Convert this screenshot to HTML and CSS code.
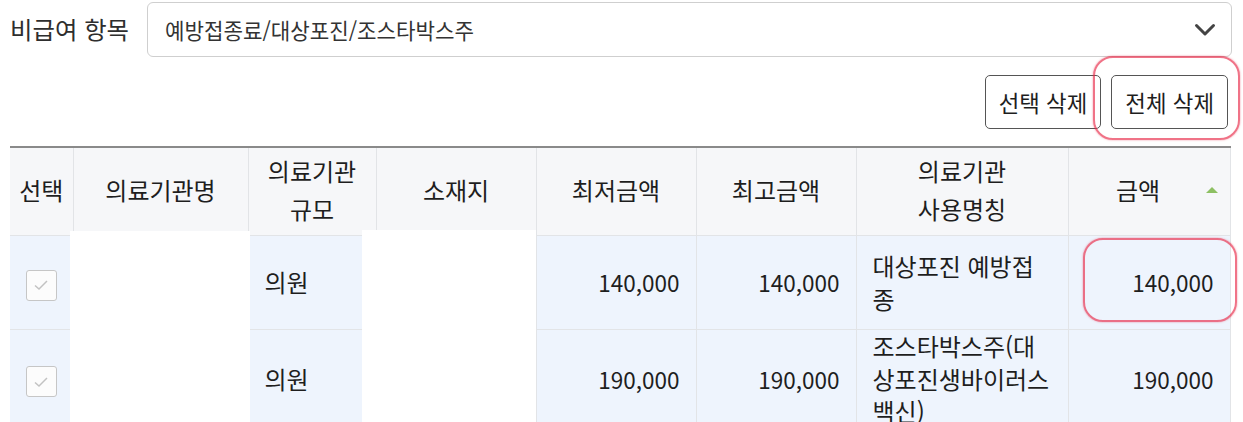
FILE: index.html
```html
<!DOCTYPE html>
<html lang="ko">
<head>
<meta charset="utf-8">
<title>비급여 항목</title>
<link rel="stylesheet" href="styles.css">
</head>
<body>
<div class="page">
  <div class="filter-row">
    <label class="filter-label">비급여 항목</label>
    <div class="select">
      <span class="select-text">예방접종료/대상포진/조스타박스주</span>
      <svg class="chevron" width="22" height="14" viewBox="0 0 22 14"><path d="M2.5 2.5 L11 11 L19.5 2.5" fill="none" stroke="#444" stroke-width="3" stroke-linecap="round" stroke-linejoin="round"/></svg>
    </div>
  </div>
  <div class="actions">
    <button class="btn">선택 삭제</button>
    <button class="btn">전체 삭제</button>
  </div>
  <div class="table-wrap">
    <table class="grid">
      <colgroup>
        <col class="c-sel"><col class="c-name"><col class="c-size"><col class="c-addr"><col class="c-min"><col class="c-max"><col class="c-alias"><col class="c-amt">
      </colgroup>
      <thead>
        <tr>
          <th>선택</th>
          <th>의료기관명</th>
          <th>의료기관<br>규모</th>
          <th>소재지</th>
          <th>최저금액</th>
          <th>최고금액</th>
          <th>의료기관<br>사용명칭</th>
          <th class="sorted">금액<span class="sort-icon"></span></th>
        </tr>
      </thead>
      <tbody>
        <tr>
          <td class="center"><span class="chk"><svg width="18" height="14" viewBox="0 0 18 14"><path d="M3 7.5 L7 11 L15 3" fill="none" stroke="#c2c2c2" stroke-width="1.5"/></svg></span></td>
          <td></td>
          <td>의원</td>
          <td></td>
          <td class="num">140,000</td>
          <td class="num">140,000</td>
          <td>대상포진 예방접<br>종</td>
          <td class="num">140,000</td>
        </tr>
        <tr>
          <td class="center"><span class="chk"><svg width="18" height="14" viewBox="0 0 18 14"><path d="M3 7.5 L7 11 L15 3" fill="none" stroke="#c2c2c2" stroke-width="1.5"/></svg></span></td>
          <td></td>
          <td>의원</td>
          <td></td>
          <td class="num">190,000</td>
          <td class="num">190,000</td>
          <td>조스타박스주(대<br>상포진생바이러스<br>백신)</td>
          <td class="num">190,000</td>
        </tr>
      </tbody>
    </table>
    <div class="redact redact-name"></div>
    <div class="redact redact-addr"></div>
  </div>
  <div class="mark mark-btn"></div>
  <div class="mark mark-amt"></div>
</div>
</body>
</html>
```

FILE: styles.css
```css
html, body {
  margin: 0;
  background: #fff;
}
body {
  font-family: "Noto Sans CJK KR", "Noto Sans", sans-serif;
  color: #1e1e1e;
}
.page {
  position: relative;
  width: 1243px;
  height: 422px;
  overflow: hidden;
  box-sizing: border-box;
  padding: 2px 11px 0 10px;
}
.filter-row {
  display: flex;
  align-items: center;
  height: 55px;
}
.filter-label {
  width: 137px;
  flex: none;
  font-size: 24.4px;
  color: #2e2e2e;
  padding-bottom: 2px;
}
.select {
  flex: 1;
  height: 55px;
  box-sizing: border-box;
  border: 1px solid #cfcfcf;
  border-radius: 6px;
  display: flex;
  align-items: center;
  justify-content: space-between;
  padding: 0 15px 0 17px;
  font-size: 21.2px;
  color: #333;
}
.chevron {
  margin-top: 1px;
}
.actions {
  display: flex;
  justify-content: flex-end;
  gap: 10px;
  margin-top: 18px;
  padding-right: 4px;
}
.btn {
  height: 54px;
  padding: 0 13px;
  border: 1px solid #555;
  border-radius: 5px;
  background: #fff;
  font-family: "Noto Sans CJK KR", "Noto Sans", sans-serif;
  font-size: 22.4px;
  color: #1e1e1e;
}
.table-wrap {
  position: relative;
  margin-top: 17px;
  width: 1220px;
}
.grid {
  width: 1220px;
  table-layout: fixed;
  border-collapse: collapse;
  font-size: 24px;
}
.c-sel { width: 63px; }
.c-name { width: 175px; }
.c-size { width: 128px; }
.c-addr { width: 160px; }
.c-min { width: 160px; }
.c-max { width: 160px; }
.c-alias { width: 212px; }
.c-amt { width: 162px; }
.grid thead tr {
  border-top: 2px solid #8a8a8a;
}
.grid th {
  height: 84px;
  padding: 0 0 3px;
  background: #f6f7f9;
  font-weight: 400;
  line-height: 38px;
  color: #1e1e1e;
  text-align: center;
  border-left: 1px solid #e2e4e7;
  border-bottom: 1px solid #e2e4e7;
}
.grid th:first-child {
  border-left: none;
}
.grid th:last-child {
  border-right: 1px solid #e2e4e7;
}
.grid th.sorted {
  position: relative;
  padding-right: 22px;
}
.sort-icon {
  position: absolute;
  right: 12px;
  top: 39px;
  width: 0;
  height: 0;
  border-left: 6px solid transparent;
  border-right: 6px solid transparent;
  border-bottom: 6px solid #8dc063;
}
.grid td {
  height: 93px;
  padding: 0 16px;
  background: #eef4fd;
  line-height: 32.5px;
  color: #1e1e1e;
  border-left: 1px solid #e2e4e7;
  border-bottom: 1px solid #e2e4e7;
  vertical-align: middle;
}
.grid td:first-child {
  border-left: none;
  padding: 0;
}
.grid td:last-child {
  border-right: 1px solid #e2e4e7;
}
.grid td.num {
  text-align: right;
  font-size: 22.5px;
}
.grid td.center {
  text-align: center;
}
.chk {
  display: inline-flex;
  align-items: center;
  justify-content: center;
  width: 31px;
  height: 31px;
  box-sizing: border-box;
  border: 1px solid #c6c6c6;
  border-radius: 3px;
  background: #fcfcfc;
  vertical-align: middle;
  margin-top: 4px;
}
.redact {
  position: absolute;
  background: #fff;
  top: 85px;
  height: 260px;
}
.redact-name {
  left: 60px;
  width: 180px;
}
.redact-addr {
  left: 352px;
  width: 174px;
  top: 84px;
}
.mark {
  position: absolute;
  border: 2.5px solid rgba(232, 40, 70, 0.65);
  border-radius: 20px;
  box-shadow: 0 0 2px rgba(232, 40, 70, 0.55);
}
.mark-btn {
  left: 1093px;
  top: 56px;
  width: 143px;
  height: 80px;
}
.mark-amt {
  left: 1083px;
  top: 238px;
  width: 150px;
  height: 80px;
}
```
